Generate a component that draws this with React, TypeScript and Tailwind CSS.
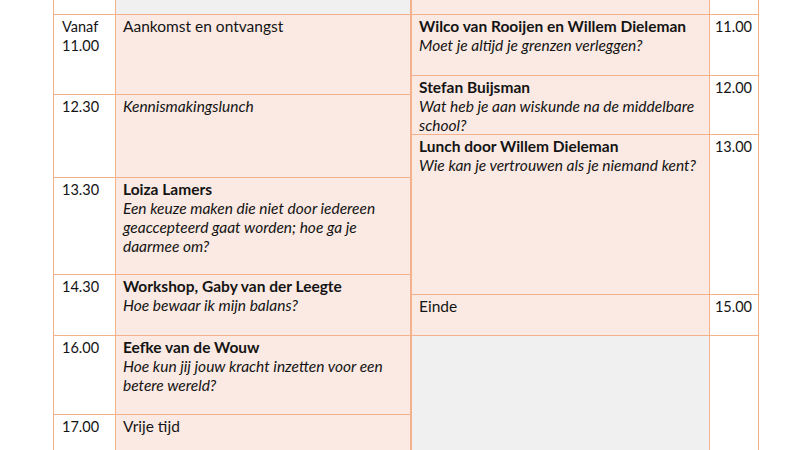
const border = 'border-[#f4b28c]'

type Slot = {
  time: string[]
  title?: string
  bold?: boolean
  italic?: boolean
  sub?: string
  h: string
  tone?: 'pink' | 'gray'
}

const leftSlots: Slot[] = [
  { time: [], h: 'h-[16px]', tone: 'gray' },
  { time: ['Vanaf', '11.00'], title: 'Aankomst en ontvangst', h: 'h-[80px]' },
  { time: ['12.30'], title: 'Kennismakingslunch', italic: true, h: 'h-[83px]' },
  {
    time: ['13.30'],
    title: 'Loiza Lamers',
    bold: true,
    sub: 'Een keuze maken die niet door iedereen geaccepteerd gaat worden; hoe ga je daarmee om?',
    h: 'h-[97px]',
  },
  { time: ['14.30'], title: 'Workshop, Gaby van der Leegte', bold: true, sub: 'Hoe bewaar ik mijn balans?', h: 'h-[61px]' },
  {
    time: ['16.00'],
    title: 'Eefke van de Wouw',
    bold: true,
    sub: 'Hoe kun jij jouw kracht inzetten voor een betere wereld?',
    h: 'h-[79px]',
  },
  { time: ['17.00'], title: 'Vrije tijd', h: 'h-[60px]' },
]

const rightSlots: Slot[] = [
  { time: [], h: 'h-[16px]' },
  {
    time: ['11.00'],
    title: 'Wilco van Rooijen en Willem Dieleman',
    bold: true,
    sub: 'Moet je altijd je grenzen verleggen?',
    h: 'h-[61px]',
  },
  {
    time: ['12.00'],
    title: 'Stefan Buijsman',
    bold: true,
    sub: 'Wat heb je aan wiskunde na de middelbare school?',
    h: 'h-[59px]',
  },
  {
    time: ['13.00'],
    title: 'Lunch door Willem Dieleman',
    bold: true,
    sub: 'Wie kan je vertrouwen als je niemand kent?',
    h: 'h-[160px]',
  },
  { time: ['15.00'], title: 'Einde', h: 'h-[41px]' },
  { time: [], h: 'h-[120px]', tone: 'gray' },
]

function Cell({ slot, edge }: { slot: Slot; edge: string }) {
  return (
    <div
      className={`flex-1 ${edge} ${border} pl-[7px] pr-2 pt-[2px] ${
        slot.tone === 'gray' ? 'bg-[#f0f0f0]' : 'bg-[#fbeae3]'
      }`}
    >
      {slot.title && (
        <p className={`${slot.bold ? 'font-bold' : ''} ${slot.italic ? 'italic' : ''}`}>{slot.title}</p>
      )}
      {slot.sub && <p className="italic">{slot.sub}</p>}
    </div>
  )
}

function Time({ slot, right }: { slot: Slot; right?: boolean }) {
  return (
    <div
      className={`shrink-0 border-r ${border} bg-white pt-[2px] text-[14.5px] ${
        right ? 'w-[49px] pr-[6px] text-right' : 'w-[62px] pl-[8px]'
      }`}
    >
      {slot.time.map((t) => (
        <p key={t}>{t}</p>
      ))}
    </div>
  )
}

export default function App() {
  return (
    <div
      className="w-[800px] h-[450px] overflow-hidden bg-white text-[15.5px] leading-[19px] text-[#141414]"
      style={{ fontFamily: 'Lato, "Open Sans", sans-serif' }}
    >
      <div className="flex pl-[53px] -mt-[1px]">
        {/* left day */}
        <div className={`w-[359px] border-l ${border}`}>
          {leftSlots.map((slot, i) => (
            <div key={i} className={`flex ${slot.h} border-b ${border}`}>
              <Time slot={slot} />
              <Cell slot={slot} edge="border-r-2" />
            </div>
          ))}
        </div>
        {/* right day */}
        <div className="w-[347px]">
          {rightSlots.map((slot, i) => (
            <div key={i} className={`flex ${slot.h} border-b ${border}`}>
              <Cell slot={slot} edge="border-r" />
              <Time slot={slot} right />
            </div>
          ))}
        </div>
      </div>
    </div>
  )
}
